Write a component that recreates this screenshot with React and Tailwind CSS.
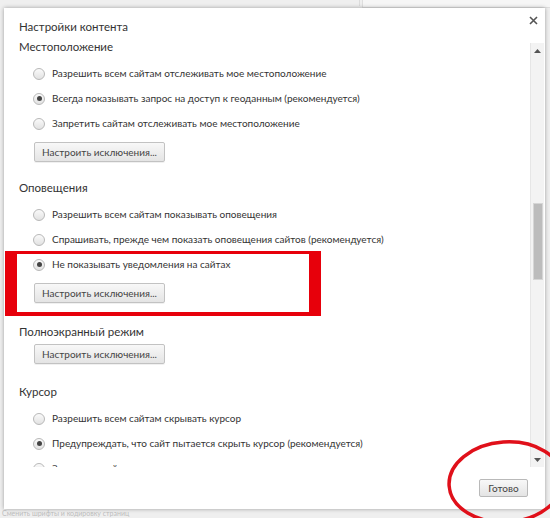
import React from 'react';

const font = { fontFamily: 'Lato, "Open Sans", sans-serif' };

const Radio = ({ checked }) => (
  <span className="w-[12px] h-[12px] rounded-full border border-[#b8b8b8] bg-gradient-to-b from-[#fafafa] to-[#e2e2e2] flex items-center justify-center shrink-0">
    {checked && <span className="w-[5px] h-[5px] rounded-full bg-[#444]" />}
  </span>
);

const Option = ({ checked, label }) => (
  <div className="flex items-center gap-[7px] h-[25px] pl-[14px] text-[10px] text-[#333] whitespace-nowrap">
    <Radio checked={checked} />
    <span>{label}</span>
  </div>
);

const ExcButton = ({ top = 'pt-[6px]' }) => (
  <div className={`flex pl-[15px] ${top}`}>
    <button className="h-[20px] w-[131px] border border-[#c2c2c2] rounded-[2px] bg-gradient-to-b from-[#f8f8f8] to-[#e4e4e4] text-[10px] text-[#444] whitespace-nowrap shadow-[0_1px_0_rgba(0,0,0,0.06)]">
      Настроить исключения...
    </button>
  </div>
);

const Heading = ({ children, className = '' }) => (
  <h3 className={`text-[11.5px] text-[#333] h-[18px] leading-[18px] whitespace-nowrap ${className}`}>{children}</h3>
);

export default function App() {
  return (
    <div className="relative w-[550px] h-[518px] overflow-hidden bg-[#efefef]" style={font}>
      {/* page behind the dialog */}
      <div className="absolute left-[60px] top-0 w-[300px] h-[6px] border-r border-[#dcdcdc]" />
      <div className="absolute left-[362px] -top-[2px] w-[208px] h-[10px] border border-[#dedede] bg-[#f6f6f6]" />
      <div className="absolute left-[2px] top-[509px] text-[7px] leading-[9px] text-[#bdbdbd] whitespace-nowrap">
        Сменить шрифты и кодировку страниц
      </div>

      {/* dialog */}
      <div className="absolute left-[4px] top-[8px] w-[541px] h-[501px] bg-white shadow-[0_0_4px_rgba(0,0,0,0.35)] flex flex-col">
        <div className="flex items-start justify-between h-[30px] pl-[15px] pr-[7px]">
          <h2 className="text-[11.5px] leading-[18px] text-[#333] pt-[10px]">Настройки контента</h2>
          <svg width="9" height="9" viewBox="0 0 9 9" className="mt-[8px]">
            <path d="M1 1 L8 8 M8 1 L1 8" stroke="#555" strokeWidth="1.6" />
          </svg>
        </div>

        <div className="flex h-[429px]">
          <div className="flex-1 overflow-hidden pl-[15px]">
            <Heading>Местоположение</Heading>
            <div className="pt-[5px]">
              <Option label="Разрешить всем сайтам отслеживать мое местоположение" />
              <Option checked label="Всегда показывать запрос на доступ к геоданным (рекомендуется)" />
              <Option label="Запретить сайтам отслеживать мое местоположение" />
            </div>
            <ExcButton />

            <Heading className="mt-[17px]">Оповещения</Heading>
            <div className="pt-[5px]">
              <Option label="Разрешить всем сайтам показывать оповещения" />
              <Option label="Спрашивать, прежде чем показать оповещения сайтов (рекомендуется)" />
              <Option checked label="Не показывать уведомления на сайтах" />
            </div>
            <ExcButton />

            <Heading className="mt-[20px]">Полноэкранный режим</Heading>
            <ExcButton top="pt-[3px]" />

            <Heading className="mt-[19px]">Курсор</Heading>
            <div className="pt-[5px]">
              <Option label="Разрешить всем сайтам скрывать курсор" />
              <Option checked label="Предупреждать, что сайт пытается скрыть курсор (рекомендуется)" />
              <Option label="Запретить сайтам скрывать курсор" />
            </div>
          </div>

          {/* scrollbar */}
          <div className="mt-[5px] w-[14px] bg-[#f3f3f3] border-l border-[#e6e6e6] flex flex-col items-center mr-[1px]">
            <svg width="7" height="4" viewBox="0 0 7 4" className="mt-[6px]">
              <path d="M0 4 L3.5 0 L7 4 Z" fill="#555" />
            </svg>
            <div className="mt-[150px] w-[10px] h-[77px] bg-[#bcbcbc] border border-[#d6d6d6]" />
            <div className="flex-1" />
            <svg width="7" height="4" viewBox="0 0 7 4" className="mb-[5px]">
              <path d="M0 0 L3.5 4 L7 0 Z" fill="#555" />
            </svg>
          </div>
        </div>

        <div className="flex justify-end pt-[12px] pr-[17px]">
          <button className="h-[18px] w-[49px] border border-[#b9b9b9] rounded-[2px] bg-gradient-to-b from-[#f8f8f8] to-[#e4e4e4] text-[10px] text-[#444] leading-none">
            Готово
          </button>
        </div>
      </div>

      {/* annotations */}
      <div className="absolute left-[5px] top-[251px] w-[316px] h-[65px] border-red-600 border-l-[12px] border-r-[12px] border-t-[3px] border-b-[4px]" />
      <svg className="absolute left-0 top-0" width="550" height="518" viewBox="0 0 550 518">
        <ellipse cx="506" cy="482" rx="57" ry="40" fill="none" stroke="#e0101a" strokeWidth="3.5" transform="rotate(-4 506 482)" />
      </svg>
    </div>
  );
}
